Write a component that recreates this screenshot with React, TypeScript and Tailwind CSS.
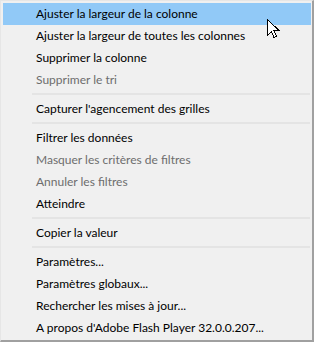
import React from "react";

type Item = { label: string; disabled?: boolean; active?: boolean } | "sep";

const items: Item[] = [
  { label: "Ajuster la largeur de la colonne", active: true },
  { label: "Ajuster la largeur de toutes les colonnes" },
  { label: "Supprimer la colonne" },
  { label: "Supprimer le tri", disabled: true },
  "sep",
  { label: "Capturer l'agencement des grilles" },
  "sep",
  { label: "Filtrer les données" },
  { label: "Masquer les critères de filtres", disabled: true },
  { label: "Annuler les filtres", disabled: true },
  { label: "Atteindre" },
  "sep",
  { label: "Copier la valeur" },
  "sep",
  { label: "Paramètres..." },
  { label: "Paramètres globaux..." },
  { label: "Rechercher les mises à jour..." },
  { label: "A propos d'Adobe Flash Player 32.0.0.207..." },
];

export default function App() {
  return (
    <div className="relative w-[314px] h-[342px] bg-[#f0f0f0] border-t border-l border-t-[#e6e6e6] border-l-[#e6e6e6] border-r-2 border-b-2 border-r-[#a0a0a0] border-b-[#a0a0a0] overflow-hidden font-['Lato',sans-serif]">
      <div className="flex flex-col pt-[2px] pl-[2px] pr-[1px]">
        {items.map((it, i) =>
          it === "sep" ? (
            <div key={i} className="h-[7px] flex items-center pl-[29px] pr-[1px]">
              <div className="h-px w-full bg-[#d7d7d7] -translate-y-[0.5px]" />
            </div>
          ) : (
            <div
              key={i}
              className={`h-[22px] flex items-center pl-[33px] text-[12px] leading-none ${
                it.active ? "bg-[#91c9f7]" : ""
              } ${it.disabled ? "text-[#6d6d6d]" : "text-black"}`}
            >
              <span className="-translate-y-[0.5px]">{it.label}</span>
            </div>
          )
        )}
      </div>
      <svg className="absolute left-[266px] top-[18px]" width="13" height="20" viewBox="0 0 13 20">
        <path
          d="M0.5 0.5 L0.5 16.5 L4.5 12.5 L7 18.5 L9.5 17.5 L7 11.5 L12 11.5 Z"
          fill="white"
          stroke="black"
          strokeWidth="1"
          shapeRendering="crispEdges"
        />
      </svg>
    </div>
  );
}
